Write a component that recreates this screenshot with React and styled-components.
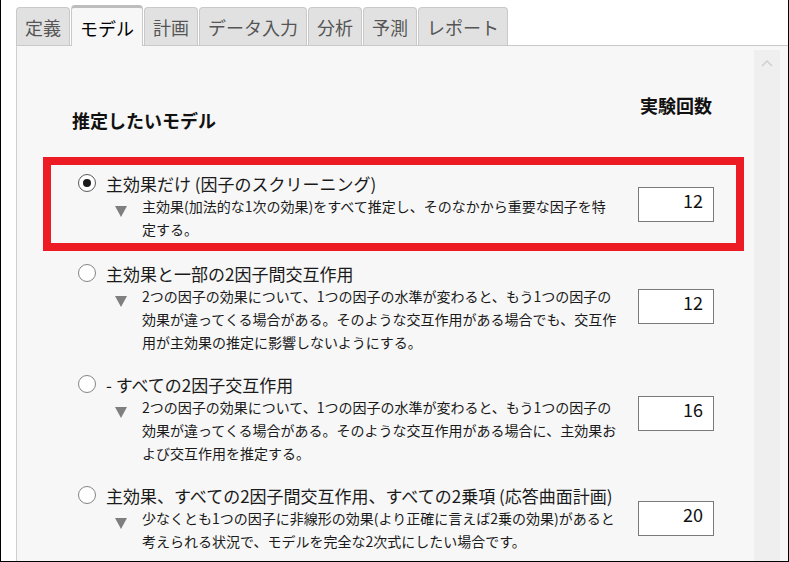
import styled, { createGlobalStyle } from 'styled-components';

const GlobalStyle = createGlobalStyle`
  body {
    margin: 0;
    background: #ffffff;
    font-family: "Noto Sans CJK JP", "Noto Sans", sans-serif;
  }
`;

const Frame = styled.div`
  width: 789px;
  height: 562px;
  box-sizing: border-box;
  border-left: 1px solid #000;
  border-right: 1px solid #000;
  border-bottom: 1px solid #000;
  background: #ffffff;
  overflow: hidden;
  display: flex;
  flex-direction: column;
`;

const TabBar = styled.div`
  display: flex;
  align-items: flex-end;
  gap: 1px;
  height: 45px;
  padding-left: 15px;
  box-sizing: border-box;
`;

const Tab = styled.div`
  position: relative;
  box-sizing: border-box;
  height: ${(p) => (p.active ? '41px' : '38px')};
  margin-bottom: ${(p) => (p.active ? '-1px' : '0')};
  padding: 0 8px;
  display: flex;
  align-items: center;
  padding-top: ${(p) => (p.active ? '1px' : '0')};
  font-size: 18px;
  color: ${(p) => (p.active ? '#000' : '#555')};
  background: ${(p) => (p.active ? '#f7f7f7' : '#e1e1e1')};
  border: 1px solid #c9c9c9;
  border-top: ${(p) => (p.active ? '3px solid #bdbdbd' : '1px solid #c9c9c9')};
  border-bottom: none;
  border-radius: 4px 4px 0 0;
  z-index: ${(p) => (p.active ? 1 : 0)};
  white-space: nowrap;
`;

const Panel = styled.div`
  flex: 1;
  display: flex;
  margin-left: 15px;
  background: #f7f7f7;
  border-left: 1px solid #cfcfcf;
  border-top: 1px solid #c9c9c9;
  min-height: 0;
`;

const Content = styled.div`
  flex: 1;
  padding: 47px 10px 0 26px;
`;

const Scrollbar = styled.div`
  width: 26px;
  margin: 4px 8px 0 0;
  background: #efefef;
  display: flex;
  justify-content: center;
  padding-top: 9px;
  box-sizing: border-box;
`;

const HeadRow = styled.div`
  display: flex;
  justify-content: space-between;
  align-items: flex-start;
  padding: 0 32px 0 29px;
  margin-bottom: 25px;
`;

const Heading = styled.div`
  font-size: 18px;
  font-weight: 700;
  line-height: 24px;
  color: #111;
  margin-top: ${(p) => p.offset || 0}px;
`;

const List = styled.div`
  display: flex;
  flex-direction: column;
  gap: 2px;
`;

const Option = styled.div`
  border: 8px solid ${(p) => (p.highlighted ? '#ed1c24' : 'transparent')};
  padding: ${(p) => (p.highlighted ? '6px 20px 2px 27px' : '0 20px 0 27px')};
`;

const RadioRow = styled.div`
  display: flex;
  align-items: center;
  gap: 10px;
  height: 24px;
`;

const Radio = styled.span`
  width: 18px;
  height: 18px;
  box-sizing: border-box;
  border-radius: 50%;
  border: 1.5px solid ${(p) => (p.checked ? '#5a5a5a' : '#858585')};
  background: #fff;
  display: flex;
  align-items: center;
  justify-content: center;
  flex: none;

  &::after {
    content: '';
    display: ${(p) => (p.checked ? 'block' : 'none')};
    width: 8px;
    height: 8px;
    border-radius: 50%;
    background: #1a1a1a;
  }
`;

const Label = styled.span`
  font-size: 17px;
  color: #1a1a1a;
  white-space: nowrap;
`;

const DescRow = styled.div`
  display: flex;
  align-items: flex-start;
  padding-left: 37px;
`;

const Caret = styled.span`
  flex: none;
  width: 0;
  height: 0;
  margin-top: 11px;
  border-left: 6.5px solid transparent;
  border-right: 6.5px solid transparent;
  border-top: 11px solid #7f7f7f;
`;

const Desc = styled.div`
  width: 480px;
  margin-left: 15px;
  font-size: 14px;
  line-height: 23px;
  color: #1a1a1a;
  white-space: nowrap;
`;

const Count = styled.input`
  margin-left: 16px;
  margin-top: ${(p) => p.shift}px;
  width: 76px;
  height: 35px;
  box-sizing: border-box;
  border: 1px solid #7a7a7a;
  background: #fff;
  padding: 0 10px 10px 0;
  text-align: right;
  font-family: "Noto Sans CJK JP", "Noto Sans", sans-serif;
  font-size: 18px;
  color: #111;
  outline: none;
`;

const tabs = ['定義', 'モデル', '計画', 'データ入力', '分析', '予測', 'レポート'];

const options = [
  {
    label: '主効果だけ (因子のスクリーニング)',
    lines: ['主効果(加法的な1次の効果)をすべて推定し、そのなかから重要な因子を特', '定する。'],
    count: 12,
    shift: -8,
    checked: true,
  },
  {
    label: '主効果と一部の2因子間交互作用',
    lines: [
      '2つの因子の効果について、1つの因子の水準が変わると、もう1つの因子の',
      '効果が違ってくる場合がある。そのような交互作用がある場合でも、交互作',
      '用が主効果の推定に影響しないようにする。',
    ],
    count: 12,
    shift: 4,
  },
  {
    label: ' - すべての2因子交互作用',
    lines: [
      '2つの因子の効果について、1つの因子の水準が変わると、もう1つの因子の',
      '効果が違ってくる場合がある。そのような交互作用がある場合に、主効果お',
      'よび交互作用を推定する。',
    ],
    count: 16,
    shift: 0,
  },
  {
    label: '主効果、すべての2因子間交互作用、すべての2乗項 (応答曲面計画)',
    lines: [
      '少なくとも1つの因子に非線形の効果(より正確に言えば2乗の効果)があると',
      '考えられる状況で、モデルを完全な2次式にしたい場合です。',
    ],
    count: 20,
    shift: -6,
  },
];

export default function App() {
  return (
    <>
      <GlobalStyle />
      <Frame>
        <TabBar>
          {tabs.map((t) => (
            <Tab key={t} active={t === 'モデル'}>
              {t}
            </Tab>
          ))}
        </TabBar>
        <Panel>
          <Content>
            <HeadRow>
              <Heading offset={15}>推定したいモデル</Heading>
              <Heading>実験回数</Heading>
            </HeadRow>
            <List>
              {options.map((o, i) => (
                <Option key={i} highlighted={i === 0}>
                  <RadioRow>
                    <Radio checked={o.checked} />
                    <Label>{o.label}</Label>
                  </RadioRow>
                  <DescRow>
                    <Caret />
                    <Desc>
                      {o.lines.map((l, j) => (
                        <div key={j}>{l}</div>
                      ))}
                    </Desc>
                    <Count shift={o.shift} defaultValue={o.count} readOnly />
                  </DescRow>
                </Option>
              ))}
            </List>
          </Content>
          <Scrollbar>
            <svg width="12" height="8" viewBox="0 0 12 8">
              <polyline points="1,7 6,2 11,7" fill="none" stroke="#cfcfcf" strokeWidth="1.5" />
            </svg>
          </Scrollbar>
        </Panel>
      </Frame>
    </>
  );
}
